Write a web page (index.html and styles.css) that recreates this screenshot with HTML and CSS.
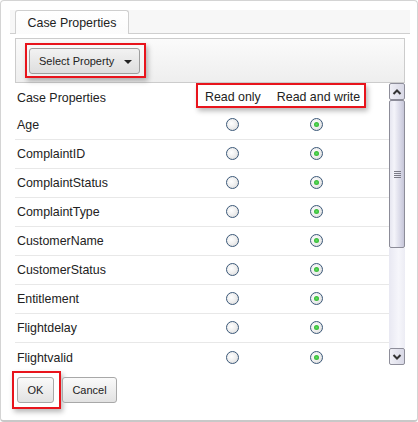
FILE: index.html
```html
<!DOCTYPE html>
<html>
<head>
<meta charset="utf-8">
<link rel="stylesheet" href="styles.css">
</head>
<body>
<div class="panel">
  <div class="tabstrip">
    <div class="tab">Case Properties</div>
  </div>
  <div class="content">
    <div class="toolbar">
      <div class="hl hl-select">
        <button class="btn select-btn">Select Property <span class="caret"></span></button>
      </div>
    </div>
    <div class="grid">
      <div class="rows">
        <div class="row head">
          <div class="label">Case Properties</div>
          <div class="hl hl-head"><span>Read only</span><span>Read and write</span></div>
        </div>
        <div class="row"><div class="label">Age</div><div class="cell"><span class="radio"></span></div><div class="cell"><span class="radio on"></span></div></div>
        <div class="row"><div class="label">ComplaintID</div><div class="cell"><span class="radio"></span></div><div class="cell"><span class="radio on"></span></div></div>
        <div class="row"><div class="label">ComplaintStatus</div><div class="cell"><span class="radio"></span></div><div class="cell"><span class="radio on"></span></div></div>
        <div class="row"><div class="label">ComplaintType</div><div class="cell"><span class="radio"></span></div><div class="cell"><span class="radio on"></span></div></div>
        <div class="row"><div class="label">CustomerName</div><div class="cell"><span class="radio"></span></div><div class="cell"><span class="radio on"></span></div></div>
        <div class="row"><div class="label">CustomerStatus</div><div class="cell"><span class="radio"></span></div><div class="cell"><span class="radio on"></span></div></div>
        <div class="row"><div class="label">Entitlement</div><div class="cell"><span class="radio"></span></div><div class="cell"><span class="radio on"></span></div></div>
        <div class="row"><div class="label">Flightdelay</div><div class="cell"><span class="radio"></span></div><div class="cell"><span class="radio on"></span></div></div>
        <div class="row last"><div class="label">Flightvalid</div><div class="cell"><span class="radio"></span></div><div class="cell"><span class="radio on"></span></div></div>
      </div>
      <div class="scrollbar">
        <div class="sb-btn">
          <svg width="10" height="8" viewBox="0 0 10 8"><path d="M1.5 6 L5 2.5 L8.5 6" fill="none" stroke="#333" stroke-width="2"/></svg>
        </div>
        <div class="sb-thumb"><span class="grip"></span></div>
        <div class="sb-track"></div>
        <div class="sb-btn">
          <svg width="10" height="8" viewBox="0 0 10 8"><path d="M1.5 2 L5 5.5 L8.5 2" fill="none" stroke="#333" stroke-width="2"/></svg>
        </div>
      </div>
    </div>
  </div>
  <div class="footer">
    <div class="hl hl-ok"><button class="btn ok-btn">OK</button></div>
    <button class="btn cancel-btn">Cancel</button>
  </div>
</div>
</body>
</html>
```
FILE: styles.css
```css
* { box-sizing: border-box; }
html, body { margin: 0; padding: 0; background: #fff; }
body {
  font-family: "Liberation Sans", Arial, sans-serif;
  color: #222;
  font-size: 12.4px;
}
.panel {
  width: 418px;
  height: 422px;
  border: 1px solid #d4d4d4;
  border-bottom: 2px solid #c8c8c8;
  border-radius: 4px;
  padding: 9px 7px 0 9px;
}
.tabstrip {
  height: 24px;
  background: #f7f7f7;
  border-bottom: 1px solid #cfcfcf;
  padding-left: 5px;
  display: flex;
  align-items: flex-end;
}
.tab {
  width: 114px;
  height: 24px;
  margin-bottom: -1px;
  border: 1px solid #cfcfcf;
  border-bottom: none;
  border-radius: 3px 3px 0 0;
  background: linear-gradient(#ffffff, #fbfbfb);
  display: flex;
  align-items: center;
  justify-content: center;
  padding-top: 1px;
  font-size: 12.4px;
}
.content {
  padding: 4px 5px 0 5px;
}
.toolbar {
  height: 45px;
  border: 1px solid #cccccc;
  background: linear-gradient(#fbfbfb, #eeeeee);
  padding: 4px 0 0 9px;
  display: flex;
  align-items: flex-start;
}
.hl {
  border: 2px solid #e8141c;
  box-shadow: 2px 3px 5px rgba(0,0,0,0.28);
}
.hl-select {
  padding: 3px 4px 2px 2px;
}
.btn {
  font-family: "Liberation Sans", Arial, sans-serif;
  font-size: 11px;
  color: #222;
  border: 1px solid #a8a8a8;
  border-radius: 3px;
  background: linear-gradient(#fafafa, #e2e2e2);
  margin: 0;
  display: flex;
  align-items: center;
  height: 26px;
}
.select-btn {
  width: 111px;
  padding: 0 7px 0 9px;
  justify-content: space-between;
  background: linear-gradient(#f2f2f2, #dedede);
  border-color: #9e9e9e;
}
.caret {
  width: 0;
  height: 0;
  border-left: 4px solid transparent;
  border-right: 4px solid transparent;
  border-top: 4px solid #222;
  margin-top: 1px;
}
.grid {
  height: 282px;
  display: flex;
  overflow: hidden;
}
.rows {
  width: 374px;
}
.row {
  display: grid;
  grid-template-columns: 175px 84px 84px 31px;
  height: 29px;
  border-bottom: 1px solid #e8e8e8;
  align-items: center;
}
.row.head {
  height: 28px;
  border-bottom: none;
  align-items: start;
}
.row.last { border-bottom: none; }
.label {
  padding-left: 2px;
}
.head .label {
  padding-top: 8px;
}
.hl-head {
  grid-column: 2 / 5;
  margin-left: 6px;
  width: 170px;
  height: 25px;
  display: flex;
  align-items: center;
  gap: 16px;
  padding: 2px 0 0 7px;
  white-space: nowrap;
}
.cell {
  display: flex;
  justify-content: center;
  align-items: center;
}
.radio {
  width: 13px;
  height: 13px;
  border-radius: 50%;
  border: 1px solid #3b5878;
  background: radial-gradient(circle at 40% 40%, #ffffff 0%, #eeeeee 50%, #d2d2d2 100%);
  display: flex;
  align-items: center;
  justify-content: center;
  margin-top: -1px;
}
.radio.on::after {
  content: "";
  width: 5px;
  height: 5px;
  border-radius: 50%;
  background: radial-gradient(circle, #5ee05e, #21a421);
}
.scrollbar {
  width: 16px;
  height: 282px;
  display: flex;
  flex-direction: column;
}
.sb-btn {
  height: 17px;
  border: 1px solid #8e8e9a;
  border-radius: 2px;
  background: linear-gradient(to right, #f0f0f6, #d8d8e6);
  display: flex;
  align-items: center;
  justify-content: center;
}
.sb-thumb {
  height: 148px;
  border: 1px solid #8c8c98;
  border-radius: 2px;
  background: linear-gradient(to right, #e6e6f0, #f4f4fa 30%, #d4d4e4 80%, #c6c6d8);
  display: flex;
  align-items: center;
  justify-content: center;
}
.grip {
  width: 7px;
  height: 7px;
  background: repeating-linear-gradient(#7a7a86 0 1px, transparent 1px 2px);
}
.sb-track {
  flex: 1;
  background: linear-gradient(to right, #e8e8f2, #f6f6fb 60%, #ececf4);
}
.footer {
  display: flex;
  align-items: center;
  padding: 6px 0 0 2px;
}
.hl-ok {
  padding: 4px 5px 4px 3px;
}
.ok-btn {
  width: 37px;
  height: 26px;
  justify-content: center;
  padding: 0;
}
.cancel-btn {
  width: 55px;
  height: 26px;
  justify-content: center;
  padding: 0;
  margin-left: 1px;
}
```
